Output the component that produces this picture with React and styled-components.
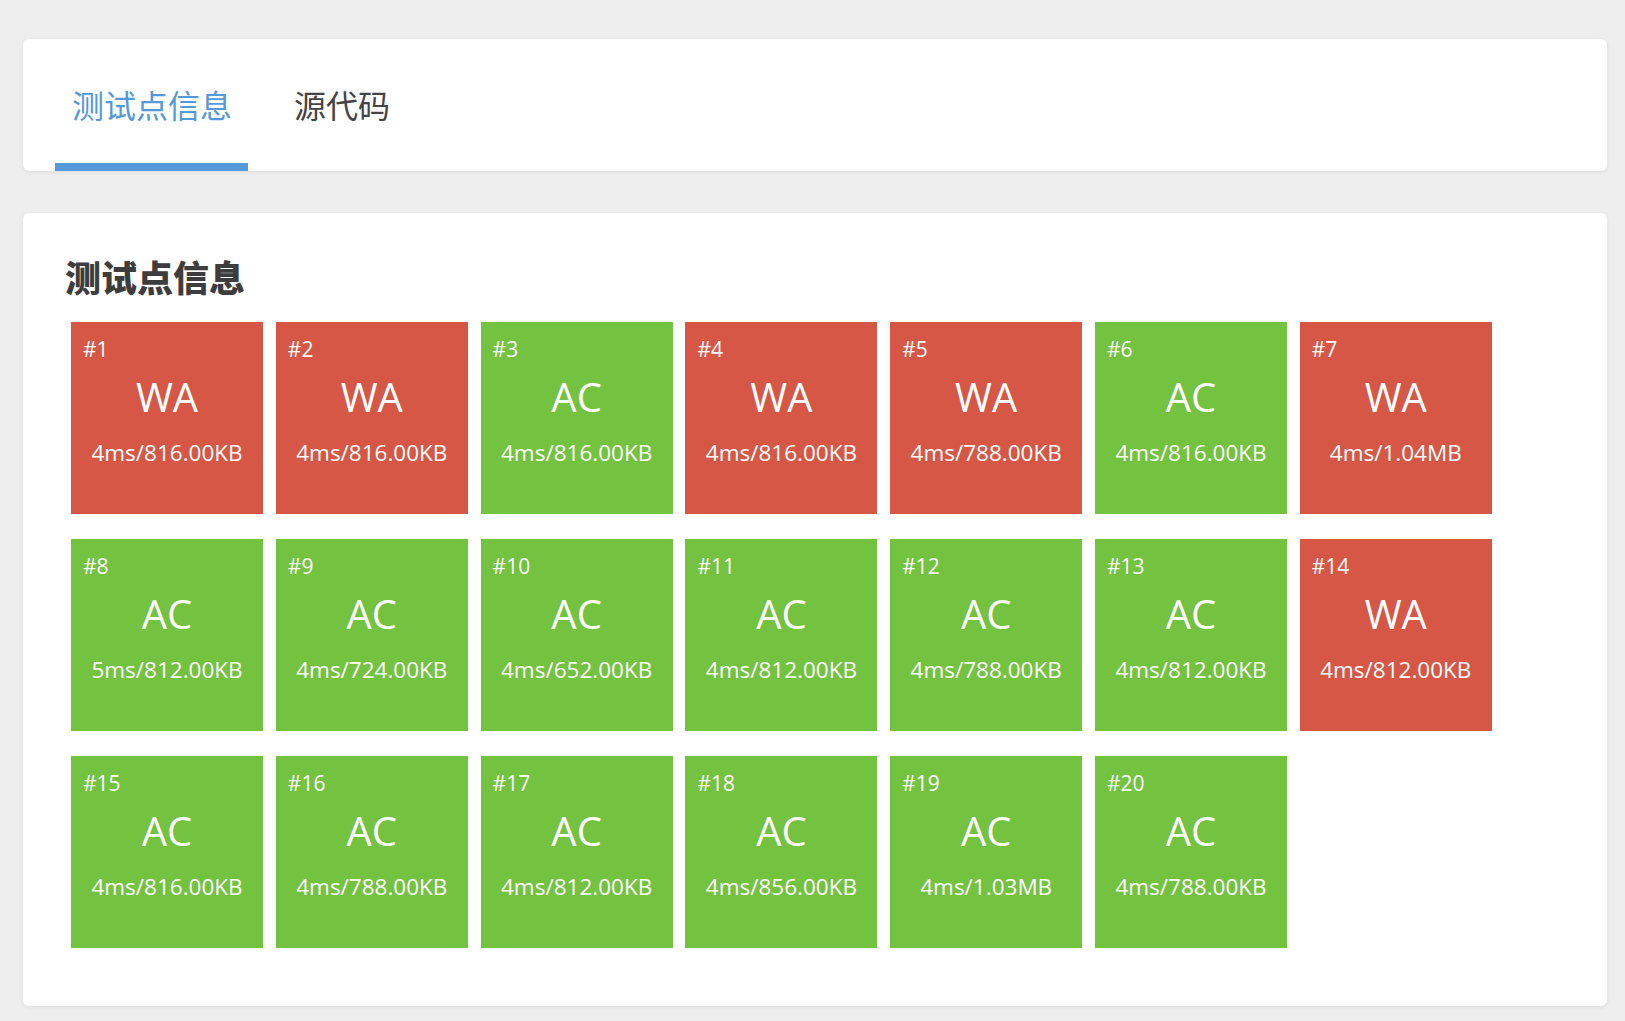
import React from 'react';
import styled, { createGlobalStyle } from 'styled-components';

const GlobalStyle = createGlobalStyle`
  html, body {
    margin: 0;
    padding: 0;
    background: #eeeeee;
  }
  body {
    font-family: "Open Sans", "Noto Sans CJK SC", sans-serif;
    color: #444;
  }
`;

const Page = styled.div`
  padding: 39px 18px 14px 23px;
  display: flex;
  flex-direction: column;
  gap: 42px;
`;

const Card = styled.div`
  background: #fff;
  border-radius: 6px;
  box-shadow: 0 1px 4px rgba(0, 0, 0, 0.08);
  overflow: hidden;
`;

const TabBar = styled.div`
  display: flex;
  height: 132px;
  padding-left: 32px;
  gap: 29px;
`;

const Tab = styled.div`
  display: flex;
  align-items: center;
  padding: 0 16px 0 17px;
  font-family: "Noto Sans CJK SC", sans-serif;
  font-size: 32px;
  color: ${({ active }) => (active ? '#5499d9' : '#444')};
  border-bottom: 8px solid ${({ active }) => (active ? '#5499d9' : 'transparent')};
  padding-top: 6px;
`;

const Body = styled.div`
  padding: 34px 40px 58px 48px;
`;

const Title = styled.h2`
  margin: 0 0 17px -6px;
  font-family: "Noto Sans CJK SC", sans-serif;
  font-weight: 900;
  font-size: 36px;
  line-height: 58px;
  color: #3d3d3d;
`;

const Grid = styled.div`
  display: grid;
  grid-template-columns: repeat(7, 192px);
  column-gap: 12.8px;
  row-gap: 25px;
`;

const Box = styled.div`
  height: 192px;
  background: ${({ ok }) => (ok ? '#73c240' : '#d65746')};
  color: #fff;
  display: flex;
  flex-direction: column;
  align-items: center;
`;

const Num = styled.div`
  align-self: flex-start;
  margin: 13px 0 0 12px;
  font-size: 21px;
  line-height: 28px;
`;

const Verdict = styled.div`
  font-size: 40px;
  line-height: 50px;
  margin-top: 9px;
`;

const Usage = styled.div`
  font-size: 22.5px;
  line-height: 30px;
  margin-top: 16px;
`;

const cases = [
  ['WA', '4ms/816.00KB'],
  ['WA', '4ms/816.00KB'],
  ['AC', '4ms/816.00KB'],
  ['WA', '4ms/816.00KB'],
  ['WA', '4ms/788.00KB'],
  ['AC', '4ms/816.00KB'],
  ['WA', '4ms/1.04MB'],
  ['AC', '5ms/812.00KB'],
  ['AC', '4ms/724.00KB'],
  ['AC', '4ms/652.00KB'],
  ['AC', '4ms/812.00KB'],
  ['AC', '4ms/788.00KB'],
  ['AC', '4ms/812.00KB'],
  ['WA', '4ms/812.00KB'],
  ['AC', '4ms/816.00KB'],
  ['AC', '4ms/788.00KB'],
  ['AC', '4ms/812.00KB'],
  ['AC', '4ms/856.00KB'],
  ['AC', '4ms/1.03MB'],
  ['AC', '4ms/788.00KB'],
];

const App = () => {
  return (
    <>
      <GlobalStyle />
      <Page>
        <Card>
          <TabBar>
            <Tab active>测试点信息</Tab>
            <Tab>源代码</Tab>
          </TabBar>
        </Card>
        <Card>
          <Body>
            <Title>测试点信息</Title>
            <Grid>
              {cases.map(([v, u], i) => (
                <Box key={i} ok={v === 'AC'}>
                  <Num>#{i + 1}</Num>
                  <Verdict>{v}</Verdict>
                  <Usage>{u}</Usage>
                </Box>
              ))}
            </Grid>
          </Body>
        </Card>
      </Page>
    </>
  );
};

export default App;
